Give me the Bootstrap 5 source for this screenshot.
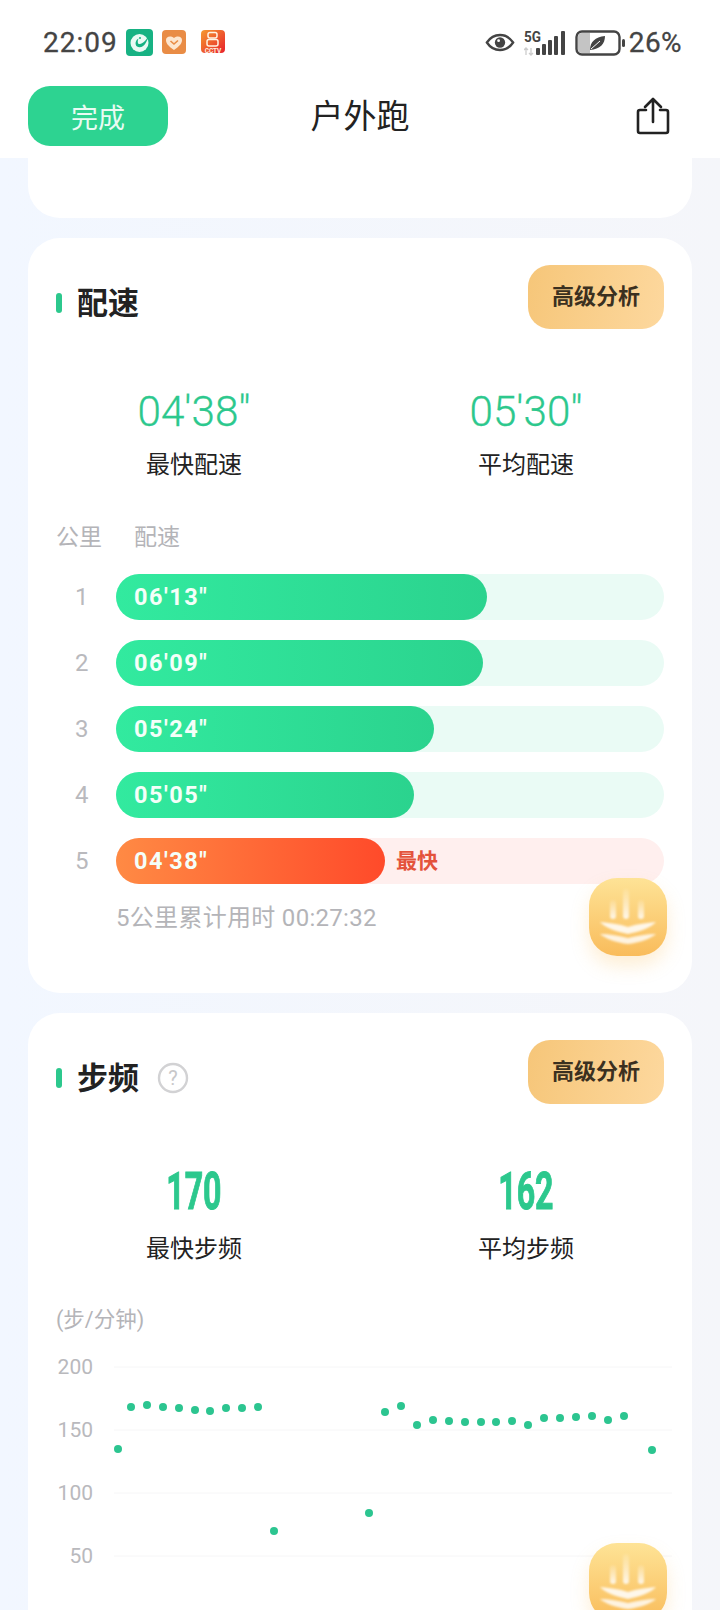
<!DOCTYPE html>
<html lang="zh">
<head>
    <meta charset="UTF-8">
    <title>户外跑</title>
    <link rel="stylesheet" href="https://cdn.jsdelivr.net/npm/bootstrap@5.3.0/dist/css/bootstrap.min.css">
    <style>
        html, body { height: 1610px; overflow: hidden; }
        body { background: linear-gradient(90deg, #f2f7ff, #f5f6fa); font-family: Roboto, "Noto Sans CJK SC", sans-serif; color: #222; }

        .top-head { height: 158px; background: #fff; }
        .status-row { height: 85px; padding: 0 38px 0 43px; color: #444; }
        .status-time { font-size: 28px; font-weight: 400; letter-spacing: 1px; line-height: 1; -webkit-text-stroke: .3px #444; }
        .status-pct { font-size: 28px; font-weight: 400; line-height: 1; letter-spacing: .4px; -webkit-text-stroke: .3px #444; }
        .app-ico { width: 27px; height: 27px; display: block; }
        .cctv-ico { margin-left: 12px; }
        .nav-row { height: 62px; padding: 0 28px; position: relative; }
        .done-btn { width: 140px; height: 60px; border: 0; border-radius: 22px; background: #2dd391; color: #e9fbf3; font-size: 27px; line-height: 1; padding: 6px 0 0; }
        .done-btn:hover { background: #2dd391; color: #e9fbf3; }
        .nav-title { font-size: 33px; color: #222; line-height: 1; position: absolute; left: 0; right: 0; text-align: center; }
        .share-ico { margin-right: 22px; }

        .page-wrap { padding: 0 28px; }
        .stub-card { height: 60px; background: #fff; border-radius: 0 0 32px 32px; }
        .run-card { background: #fff; border: 0; border-radius: 32px; position: relative; margin-top: 20px; padding: 27px 28px 0 28px; }
        .pace-card { height: 755px; }
        .cad-card { height: 597px; border-radius: 32px 32px 0 0; overflow: hidden; }
        .sec-head { height: 64px; }
        .sec-mark { width: 6px; height: 20px; background: #2cc88d; border-radius: 3px; margin: 12px 15px 0 0; }
        .sec-title { font-size: 31px; font-weight: 700; color: #222; line-height: 1; margin-top: 12px; }
        .help-ico { width: 32px; height: 32px; margin: 12px 0 0 18px; }
        .adv-btn { width: 136px; height: 64px; border: 0; border-radius: 22px; background: linear-gradient(100deg, #f6c679, #fdd89e); color: #3b3020; font-size: 22px; font-weight: 700; line-height: 1; padding: 0; }
        .adv-btn:hover { background: linear-gradient(100deg, #f6c679, #fdd89e); color: #3b3020; }

        .stat-row { margin: 58px -28px 0; }
        .cad-card .stat-row { margin-top: 63px; }
        .stat-val { font-size: 42.200px; font-weight: 300; color: #2cc88d; line-height: 50px; -webkit-text-stroke: .3px #2cc88d; }
        .stat-val-bold { font-size: 51px; font-weight: 700; color: #2cc88d; line-height: 50px; display: inline-block; transform: scaleX(.63); -webkit-text-stroke: 1px #2cc88d; }
        .stat-lab { font-size: 24px; color: #222; line-height: 32px; margin-top: 12px; }
        .cad-card .stat-lab { margin-top: 16px; }

        .km-head { font-size: 23px; color: #b4b4b8; line-height: 30px; margin-top: 42px; }
        .km-head span:first-child { width: 78px; display: inline-block; }
        .km-list { margin-top: 21px; }
        .km-row { height: 46px; margin-bottom: 20px; }
        .km-num { width: 60px; padding-left: 19px; font-size: 24px; color: #b9b9bd; line-height: 1; }
        .km-track { flex: 1; height: 46px; border-radius: 23px; background: #eafbf5; }
        .km-track-hot { background: #ffefee; }
        .km-bar { height: 46px; border-radius: 23px; padding-left: 18px; background: linear-gradient(90deg, #32ea9f, #2bd38e); color: #f4fff9; font-size: 23.500px; font-weight: 700; letter-spacing: 1.500px; line-height: 46px; }
        .km-bar-hot { background: linear-gradient(90deg, #ff8a44, #ff4a2a); }
        .km-tag { font-size: 21px; font-weight: 700; color: #e4533c; margin-left: 11px; line-height: 1; }
        .km-foot { font-size: 24px; letter-spacing: .3px; color: #b4b4b8; line-height: 30px; margin: -1px 0 0 60px; }

        .ai-btn { position: absolute; right: 25px; width: 78px; height: 78px; border-radius: 28px; background: linear-gradient(180deg, #fee396, #f9bc5b); box-shadow: 0 10px 18px rgba(250, 190, 90, .25); }
        .ai-btn svg { width: 78px; height: 78px; display: block; }
        .ai-1 { top: 640px; }
        .ai-2 { top: 530px; }

        .unit-lab { font-size: 21.500px; color: #b4b4b8; line-height: 30px; margin-top: 40px; }
        .cad-chart { display: block; position: absolute; left: 0; top: 0; }
        .cad-chart text { font-family: Roboto, sans-serif; font-size: 21px; fill: #b9b9bd; text-anchor: end; }
    </style>
</head>
<body>

    <div class="top-head">
        <div class="status-row d-flex align-items-center">
            <span class="status-time">22:09</span>
            <svg class="app-ico ms-2" viewBox="0 0 27 27"><rect width="27" height="27" rx="4" fill="#17b283"/><circle cx="13.500" cy="14" r="9" fill="#eafaf4"/><path d="M24 5c-3 5-6 9-10 10-2 .5-3-2-1.500-5.500-3 1.500-4 6-1.500 8 3 2 7 0 9-4 1.500-3 3-6 4-8.500z" fill="#17b283"/><circle cx="14" cy="9" r="1" fill="#17b283"/></svg>
            <svg class="app-ico ms-2" viewBox="0 0 27 27"><rect x="1" y="1" width="24" height="24" rx="4" fill="#e98c45"/><path d="M13 21C7 17 5 14 5 11c0-3 4-5 8-2 4-3 8-1 8 2 0 3-2 6-8 10z" fill="#fde6cf"/><path d="M9.500 12l3.500 3 4-3.500" fill="none" stroke="#e98c45" stroke-width="1.600"/></svg>
            <svg class="app-ico cctv-ico" viewBox="0 0 27 27"><defs><linearGradient id="cctvG" x1="0" y1="0" x2="1" y2="1"><stop offset="0" stop-color="#f59a2e"/><stop offset="1" stop-color="#e8202c"/></linearGradient></defs><rect x="1" y="1" width="24" height="23" rx="4" fill="url(#cctvG)"/><rect x="8" y="3.500" width="9" height="5.500" rx="2" fill="none" stroke="#fff3e2" stroke-width="1.500"/><rect x="7" y="10.500" width="11" height="6.500" rx="2" fill="none" stroke="#fff3e2" stroke-width="1.500"/><text x="13" y="24" text-anchor="middle" font-family="Roboto" font-size="6.500" font-weight="700" fill="#fff0e0">CCTV</text></svg>

            <div class="ms-auto d-flex align-items-center">
                <svg width="30" height="21" viewBox="0 0 32 22"><path d="M2 11C6 5 11 3 16 3s10 2 14 8c-4 6-9 8-14 8S6 17 2 11z" fill="none" stroke="#444" stroke-width="2.500"/><circle cx="16" cy="11" r="5.500" fill="#444"/><circle cx="14.500" cy="9" r="1.500" fill="#fff"/></svg>
                <span class="d-inline-block" style="width:9px"></span>
                <svg width="42" height="27" viewBox="0 0 42 27"><text x="0" y="13" font-family="Roboto" font-size="15" font-weight="700" fill="#444" textLength="17" lengthAdjust="spacingAndGlyphs">5G</text><path d="M2 26v-7M0 21l2-2 2 2M7 19v7M5 24l2 2 2-2" fill="none" stroke="#ccc" stroke-width="1.300"/><rect x="12" y="19" width="4" height="7" rx="1" fill="#444"/><rect x="18" y="15" width="4" height="11" rx="1" fill="#444"/><rect x="24" y="11" width="4" height="15" rx="1" fill="#444"/><rect x="30" y="7" width="4" height="19" rx="1" fill="#444"/><rect x="37" y="2" width="4" height="24" rx="1" fill="#444"/></svg>
                <span class="d-inline-block" style="width:9px"></span>
                <svg width="50" height="26" viewBox="0 0 50 26"><rect x="1.500" y="1.500" width="43" height="23" rx="5.500" fill="#fff" stroke="#444" stroke-width="2.400"/><path d="M3 7a4 4 0 0 1 4-4h8v20H7a4 4 0 0 1-4-4z" fill="#c4c4c4"/><path d="M15 20c0-8 5-13 15-14 0 8-5 13-15 14z" fill="#444"/><path d="M16 19l9-8" stroke="#fff" stroke-width="1"/><rect x="47" y="9" width="3" height="8" rx="1.500" fill="#444"/></svg>
                <span class="status-pct ms-1">26%</span>
            </div>
        </div>
        <div class="nav-row d-flex align-items-center justify-content-between">
            <div class="nav-title">户外跑</div>
            <button class="btn done-btn position-relative" type="button">完成</button>
            <svg class="position-relative share-ico" width="34" height="38" viewBox="0 0 34 38"><path d="M10 13H4a2 2 0 0 0-2 2v19a2 2 0 0 0 2 2h26a2 2 0 0 0 2-2V15a2 2 0 0 0-2-2h-6" fill="none" stroke="#222" stroke-width="2.600" stroke-linecap="round"/><path d="M17 25V3M9 10l8-8 8 8" fill="none" stroke="#222" stroke-width="2.600" stroke-linecap="round" stroke-linejoin="round"/></svg>
        </div>
    </div>

    <div class="page-wrap">
        <div class="stub-card"></div>

        <div class="run-card pace-card">
            <div class="sec-head d-flex align-items-center">
                <span class="sec-mark"></span>
                <span class="sec-title">配速</span>
                <button class="btn adv-btn ms-auto" type="button">高级分析</button>
            </div>
            <div class="row g-0 text-center stat-row">
                <div class="col-6"><div class="stat-val">04'38"</div><div class="stat-lab">最快配速</div></div>
                <div class="col-6"><div class="stat-val">05'30"</div><div class="stat-lab">平均配速</div></div>
            </div>
            <div class="km-head"><span>公里</span><span>配速</span></div>
            <div class="km-list" id="kmList"></div>
            <div class="km-foot">5公里累计用时 00:27:32</div>
            <div class="ai-btn ai-1"><svg viewBox="0 0 78 78"><use href="#aiGlyph"/></svg></div>
        </div>

        <div class="run-card cad-card">
            <div class="sec-head d-flex align-items-center">
                <span class="sec-mark"></span>
                <span class="sec-title">步频</span>
                <svg class="help-ico" viewBox="0 0 32 32"><circle cx="16" cy="16" r="14" fill="none" stroke="#d2d2d4" stroke-width="2.400"/><text x="16" y="23" text-anchor="middle" font-family="Roboto" font-size="20" fill="#c8c8ca">?</text></svg>
                <button class="btn adv-btn ms-auto" type="button">高级分析</button>
            </div>
            <div class="row g-0 text-center stat-row">
                <div class="col-6"><div class="stat-val-bold">170</div><div class="stat-lab">最快步频</div></div>
                <div class="col-6"><div class="stat-val-bold">162</div><div class="stat-lab">平均步频</div></div>
            </div>
            <div class="unit-lab">(步/分钟)</div>
            <svg class="cad-chart" id="cadChart" width="664" height="597" viewBox="0 0 664 597"></svg>
            <div class="ai-btn ai-2"><svg viewBox="0 0 78 78"><use href="#aiGlyph"/></svg></div>
        </div>
    </div>

    <svg width="0" height="0" class="position-absolute">
        <defs>
            <linearGradient id="aiBar" x1="0" y1="0" x2="0" y2="1"><stop offset="0" stop-color="#fff" stop-opacity=".1"/><stop offset="1" stop-color="#fff" stop-opacity=".85"/></linearGradient>
            <filter id="aiSoft" x="-10%" y="-10%" width="120%" height="120%"><feGaussianBlur stdDeviation="1"/></filter>
            <g id="aiGlyph" filter="url(#aiSoft)">
                <rect x="21" y="22" width="6" height="19" rx="3" fill="url(#aiBar)"/>
                <rect x="34" y="11" width="6" height="30" rx="3" fill="url(#aiBar)"/>
                <rect x="49" y="22" width="6" height="19" rx="3" fill="url(#aiBar)"/>
                <path d="M11 44c9 1 19 2 28 5 9-3 19-4 28-5-4 5-17 10-28 12C28 54 15 49 11 44z" fill="#fff" opacity=".85"/>
                <path d="M11 56c9 0 19 2 28 4 9-2 19-4 28-4-4 4-17 9-28 10C28 65 15 60 11 56z" fill="#fff" opacity=".8"/>
            </g>
        </defs>
    </svg>

    <script>
        // pace rows: bar width in px from the track start
        const kmData = [
            { km: 1, pace: "06'13\"", w: 371 },
            { km: 2, pace: "06'09\"", w: 367 },
            { km: 3, pace: "05'24\"", w: 318 },
            { km: 4, pace: "05'05\"", w: 298 },
            { km: 5, pace: "04'38\"", w: 269, hot: true }
        ];
        const list = document.getElementById("kmList");
        kmData.forEach(r => {
            list.innerHTML += `
                <div class="km-row d-flex align-items-center">
                    <div class="km-num">${r.km}</div>
                    <div class="km-track d-flex align-items-center ${r.hot ? 'km-track-hot' : ''}">
                        <div class="km-bar ${r.hot ? 'km-bar-hot' : ''}" style="width:${r.w}px">${r.pace}</div>
                        ${r.hot ? '<span class="km-tag">最快</span>' : ''}
                    </div>
                </div>`;
        });

        // scatter chart, coordinates relative to the card (card left 28, top 1013)
        const dots = [[118,1449],[131,1407],[147,1405],[163,1407],[179,1408],[195,1410],[210,1411],[226,1408],[242,1408],[258,1407],[274,1531],
            [369,1513],[385,1412],[401,1406],[417,1425],[433,1420],[449,1421],[465,1422],[481,1422],[496,1422],[512,1421],[528,1425],[544,1418],[560,1418],[576,1417],[592,1416],[608,1420],[624,1416],[652,1450]];
        const ticks = [[200,1367],[150,1430],[100,1493],[50,1556]];
        let svg = "";
        ticks.forEach(t => {
            svg += `<line x1="86" x2="644" y1="${t[1]-1013}" y2="${t[1]-1013}" stroke="#f6f6f7"/>`;
            svg += `<text x="65" y="${t[1]-1013+7}">${t[0]}</text>`;
        });
        dots.forEach(d => {
            svg += `<circle cx="${d[0]-28}" cy="${d[1]-1013}" r="4" fill="#2cc590"/>`;
        });
        document.getElementById("cadChart").innerHTML = svg;
    </script>
    <script src="https://cdn.jsdelivr.net/npm/bootstrap@5.3.0/dist/js/bootstrap.bundle.min.js"></script>
</body>
</html>
